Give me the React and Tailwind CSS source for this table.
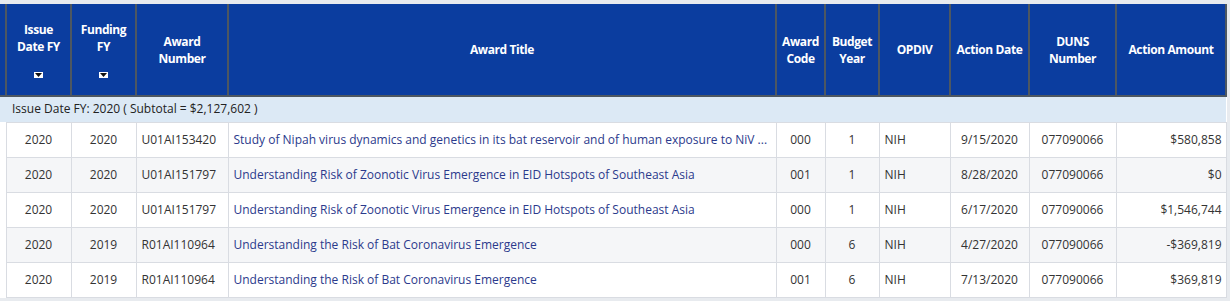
import React from "react";

const rows = [
  ["2020", "2020", "U01AI153420", "Study of Nipah virus dynamics and genetics in its bat reservoir and of human exposure to NiV ...", "000", "1", "NIH", "9/15/2020", "077090066", "$580,858"],
  ["2020", "2020", "U01AI151797", "Understanding Risk of Zoonotic Virus Emergence in EID Hotspots of Southeast Asia", "001", "1", "NIH", "8/28/2020", "077090066", "$0"],
  ["2020", "2020", "U01AI151797", "Understanding Risk of Zoonotic Virus Emergence in EID Hotspots of Southeast Asia", "000", "1", "NIH", "6/17/2020", "077090066", "$1,546,744"],
  ["2020", "2019", "R01AI110964", "Understanding the Risk of Bat Coronavirus Emergence", "000", "6", "NIH", "4/27/2020", "077090066", "-$369,819"],
  ["2020", "2019", "R01AI110964", "Understanding the Risk of Bat Coronavirus Emergence", "001", "6", "NIH", "7/13/2020", "077090066", "$369,819"],
];

const widths = [6, 65, 65, 92, 548, 49, 54, 71, 79, 87, 110];

function SortIcon() {
  return (
    <span className="mx-auto mt-[17px] flex h-[6px] w-[9px] items-center justify-center bg-white">
      <svg width="7" height="4" viewBox="0 0 7 4">
        <path d="M0 0 H7 L3.5 4 Z" fill="#111" />
      </svg>
    </span>
  );
}

function Th({ children, sort }) {
  return (
    <th className="border-x-2 border-b-2 border-[#4d5761] px-1 align-middle text-center text-[12px] font-bold leading-[17px] tracking-[-0.4px] text-white">
      <div className="flex flex-col items-center">
        <div>{children}</div>
        {sort && <SortIcon />}
      </div>
    </th>
  );
}

export default function App() {
  return (
    <div className="h-[301px] w-[1230px] bg-[#e8ebef] pt-1 pr-1" style={{ fontFamily: '"Open Sans", "Liberation Sans", sans-serif' }}>
      <table className="w-[1226px] table-fixed border-collapse bg-white">
        <colgroup>
          {widths.map((w, i) => (
            <col key={i} style={{ width: w }} />
          ))}
        </colgroup>
        <thead>
          <tr className="h-[92px] bg-[#0b3d9f]">
            <th className="border-b-2 border-[#4d5761]"></th>
            <Th sort>Issue<br />Date FY</Th>
            <Th sort>Funding<br />FY</Th>
            <Th>Award<br />Number</Th>
            <Th>Award Title</Th>
            <Th>Award<br />Code</Th>
            <Th>Budget<br />Year</Th>
            <Th>OPDIV</Th>
            <Th>Action Date</Th>
            <Th>DUNS<br />Number</Th>
            <Th>Action Amount</Th>
          </tr>
        </thead>
        <tbody className="text-[12px] text-[#333]">
          <tr className="h-[26px] bg-[#dce9f5]">
            <td colSpan={11} className="px-[12px] text-[12px] text-[#222]">
              Issue Date FY: 2020 ( Subtotal = $2,127,602 )
            </td>
          </tr>
          {rows.map((r, i) => (
            <tr key={i} className={"h-[35px] " + (i % 2 ? "bg-[#f5f6f8]" : "bg-white")}>
              <td className="bg-white"></td>
              <td className="border border-[#d9dce2] text-center">{r[0]}</td>
              <td className="border border-[#d9dce2] text-center">{r[1]}</td>
              <td className="border border-[#d9dce2] px-[5px]">{r[2]}</td>
              <td className="truncate border border-[#d9dce2] px-[5px] text-[#2b3a8c]">{r[3]}</td>
              <td className="border border-[#d9dce2] text-center">{r[4]}</td>
              <td className="border border-[#d9dce2] text-center">{r[5]}</td>
              <td className="border border-[#d9dce2] px-[5px]">{r[6]}</td>
              <td className="border border-[#d9dce2] text-center">{r[7]}</td>
              <td className="border border-[#d9dce2] text-center">{r[8]}</td>
              <td className="border border-[#d9dce2] px-[4px] text-right">{r[9]}</td>
            </tr>
          ))}
        </tbody>
      </table>
    </div>
  );
}
